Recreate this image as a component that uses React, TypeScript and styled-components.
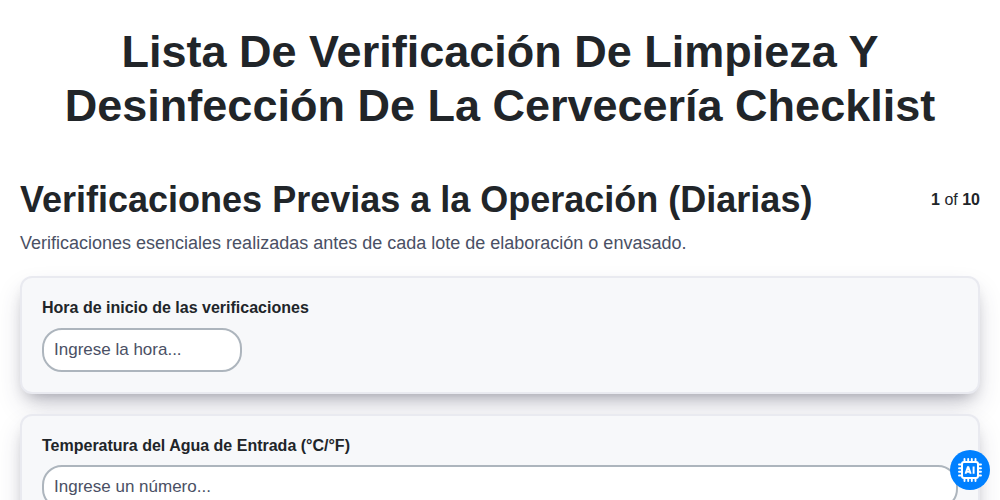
import styled, { createGlobalStyle } from "styled-components"

const checks = [
  { label: "Hora de inicio de las verificaciones", placeholder: "Ingrese la hora...", type: "time" },
  { label: "Temperatura del Agua de Entrada (°C/°F)", placeholder: "Ingrese un número...", type: "number" },
]

const AiChipIcon = () => (
  <svg width="24" height="24" viewBox="0 0 24 24" fill="none" stroke="#fff">
    <rect x="4" y="4" width="16" height="16" rx="2" strokeWidth="2" />
    <path
      d="M6.5 1v3M10.2 1v3M13.8 1v3M17.5 1v3M6.5 20v3M10.2 20v3M13.8 20v3M17.5 20v3M1 6.5h3M1 10.2h3M1 13.8h3M1 17.5h3M20 6.5h3M20 10.2h3M20 13.8h3M20 17.5h3"
      strokeWidth="1.9"
      strokeLinecap="round"
    />
    <path d="M7.5 15.7 9.8 9.2h.6l2.3 6.5M8.5 13.8h3.4M15.6 8.6v7.1" strokeWidth="1.9" />
  </svg>
)

const App = () => {
  return (
    <>
      <GlobalStyle />
      <Container>
        <Title>Lista De Verificación De Limpieza Y Desinfección De La Cervecería Checklist</Title>
        <SectionHeader>
          <SectionTitle>Verificaciones Previas a la Operación (Diarias)</SectionTitle>
          <Progress>
            <b>1</b> of <b>10</b>
          </Progress>
        </SectionHeader>
        <Description>Verificaciones esenciales realizadas antes de cada lote de elaboración o envasado.</Description>
        {checks.map((check) => (
          <Card key={check.label}>
            <Label>{check.label}</Label>
            <Input $short={check.type === "time"} placeholder={check.placeholder} />
          </Card>
        ))}
      </Container>
      <AiButton aria-label="AI">
        <AiChipIcon />
      </AiButton>
    </>
  )
}

export default App

const GlobalStyle = createGlobalStyle`
  * {
    box-sizing:border-box;
  }
  body {
    margin:0;
    background:#fff;
    color:#212529;
    font-family:"Liberation Sans", Arial, sans-serif;
    font-size:16px;
    line-height:1.5;
  }
`

const Container = styled.main`
  height:500px;
  padding:25px 20px 0;
  overflow:hidden;
`

const Title = styled.h1`
  margin:0 0 40px;
  font-size:45px;
  font-weight:700;
  line-height:54px;
  text-align:center;
`

const SectionHeader = styled.div`
  display:flex;
  justify-content:space-between;
  align-items:center;
  height:54px;
`

const SectionTitle = styled.h2`
  margin:0;
  font-size:36px;
  font-weight:700;
  line-height:54px;
`

const Progress = styled.span`
  white-space:nowrap;
`

const Description = styled.p`
  margin:3px 0 19px;
  font-size:18px;
  line-height:27px;
  color:#4a5064;
`

const Card = styled.section`
  height:118px;
  margin-bottom:20px;
  padding:18px 20px 20px;
  border:2px solid #e9eaf0;
  border-radius:12px;
  background:#f7f8fa;
  box-shadow:rgba(50, 50, 93, 0.25) 0 13px 27px -5px, rgba(0, 0, 0, 0.3) 0 8px 16px -8px;
`

const Label = styled.label`
  display:block;
  font-weight:700;
`

const Input = styled.input<{ $short: boolean }>`
  display:block;
  width:${({ $short }) => ($short ? "200px" : "100%")};
  height:44px;
  margin-top:${({ $short }) => ($short ? "8px" : "7px")};
  padding:0 10px;
  border:2px solid #adb5bd;
  border-radius:20px;
  background:#fff;
  font-family:inherit;
  font-size:17px;
  &::placeholder{
    color:#4a5064;
    opacity:1;
  }
`

const AiButton = styled.button`
  position:fixed;
  right:10px;
  bottom:10px;
  display:flex;
  justify-content:center;
  align-items:center;
  width:40px;
  height:40px;
  padding:0;
  border:0;
  border-radius:50%;
  background:#0080ff;
`
